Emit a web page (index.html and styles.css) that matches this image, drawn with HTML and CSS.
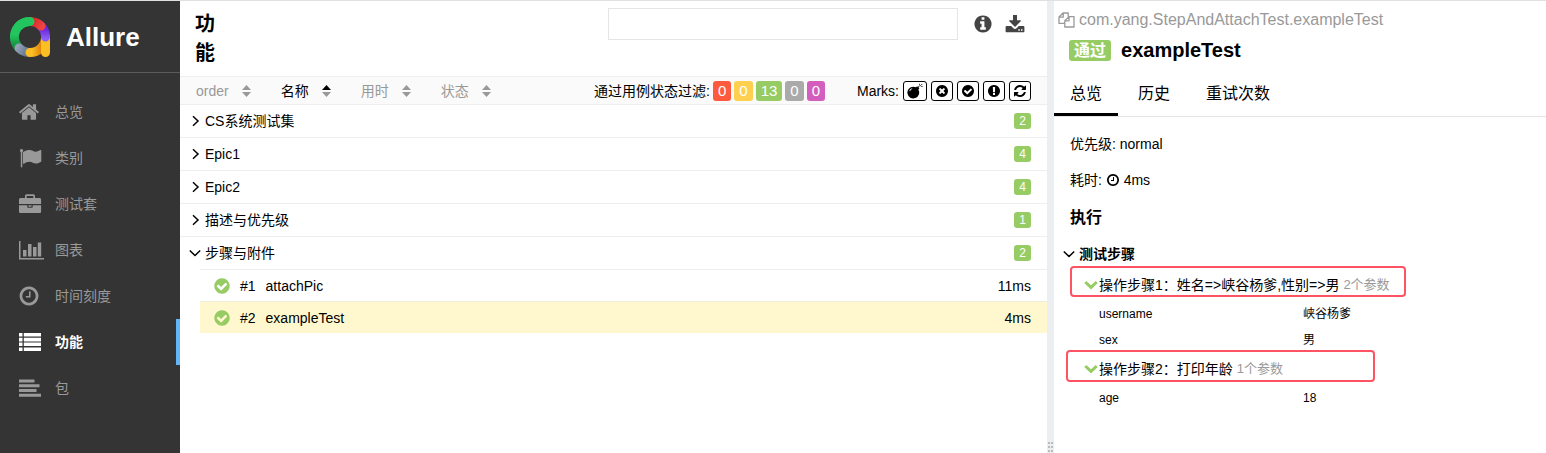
FILE: index.html
```html
<!DOCTYPE html>
<html lang="zh-CN">
<head>
<meta charset="utf-8">
<title>Allure</title>
<link rel="stylesheet" href="styles.css">
</head>
<body>
<svg class="sprite" aria-hidden="true">
  <symbol id="i-home" viewBox="0 0 1792 1792"><path d="M1472 992v480q0 26-19 45t-45 19h-384v-384h-256v384h-384q-26 0-45-19t-19-45v-480q0-1 .5-3t.5-3l575-474 575 474q1 2 1 6zm223-69l-62 74q-8 9-21 11h-3q-13 0-21-7l-692-577-692 577q-12 8-24 7-13-2-21-11l-62-74q-8-10-7-23.5t11-21.5l719-599q32-26 76-26t76 26l244 204v-195q0-14 9-23t23-9h192q14 0 23 9t9 23v408l219 182q10 8 11 21.5t-7 23.5z"/></symbol>
  <symbol id="i-flag" viewBox="0 0 26 22"><path d="M3.500 2a1.700 1.700 0 0 1 .8 3.200V20.200H2.800V5.200A1.700 1.700 0 0 1 3.500 2zM5.300 5C7.500 3.600 9.500 3 11.500 3c2.600 0 4 1.700 6.300 1.700 1.700 0 3.200-.8 4.600-1.600.5-.2.9 0 .9.500v10.600c0 .4-.3.700-.6.900-1.400.8-3 1.500-4.600 1.500-2.800 0-4-1.800-6.800-1.800-2 0-3.700.9-5.400 1.900-.4.200-.9 0-.9-.5V5.600c0-.2.100-.4.300-.6z"/></symbol>
  <symbol id="i-case" viewBox="0 0 26 22"><path fill-rule="evenodd" d="M7 5V3.200C7 2 7.700 1.300 8.800 1.300h6.400c1.100 0 1.800.7 1.800 1.900V5h4.500c.9 0 1.600.7 1.600 1.600V11H1V6.600C1 5.700 1.700 5 2.600 5zM8.700 5h6.600V3H8.700zM1 12.200h8.300v1.600c0 .6.4 1 1 1h3.400c.6 0 1-.4 1-1v-1.600h8.400v6.200c0 .9-.7 1.600-1.600 1.600h-19C1.700 20 1 19.300 1 18.400zM10.500 12.200h3v1.500h-3z"/></symbol>
  <symbol id="i-chart" viewBox="0 0 26 22"><path d="M1 2h1.500v17H26v1.600H1zM5 11h3.500v6.500H5zM10 5h3.500v12.500H10zM15 8h3.500v9.500H15zM19.800 3.500h3.400v14h-3.400z"/></symbol>
  <symbol id="i-clock" viewBox="0 0 1792 1792"><path d="M1024 544v448q0 14-9 23t-23 9h-320q-14 0-23-9t-9-23v-64q0-14 9-23t23-9h224v-352q0-14 9-23t23-9h64q14 0 23 9t9 23zm416 352q0-148-73-273t-198-198-273-73-273 73-198 198-73 273 73 273 198 198 273 73 273-73 198-198 73-273zm224 0q0 209-103 385.5t-279.5 279.5-385.5 103-385.5-103-279.5-279.5-103-385.5 103-385.5 279.5-279.5 385.5-103 385.5 103 279.5 279.5 103 385.5z"/></symbol>
  <symbol id="i-list" viewBox="0 0 26 22"><path d="M1 2h3.500v3.600H1zM5.800 2H23v3.600H5.800zM1 6.800h3.500v3.600H1zM5.800 6.800H23v3.600H5.800zM1 11.600h3.500v3.400H1zM5.800 11.600H23v3.400H5.800zM1 16.400h3.500V20H1zM5.800 16.400H23V20H5.800z"/></symbol>
  <symbol id="i-align" viewBox="0 0 26 22"><path d="M1 2.500h15.500v3H1zM1 7.200h20.500v3H1zM1 12h17.500v3H1zM1 16.700h22v3H1z"/></symbol>
  <symbol id="i-info" viewBox="0 0 1792 1792"><path d="M1152 1376v-160q0-14-9-23t-23-9h-96v-512q0-14-9-23t-23-9h-320q-14 0-23 9t-9 23v160q0 14 9 23t23 9h96v320h-96q-14 0-23 9t-9 23v160q0 14 9 23t23 9h448q14 0 23-9t9-23zm-128-896v-160q0-14-9-23t-23-9h-192q-14 0-23 9t-9 23v160q0 14 9 23t23 9h192q14 0 23-9t9-23zm640 416q0 209-103 385.5t-279.5 279.5-385.500 103-385.5-103-279.5-279.5-103-385.5 103-385.5 279.5-279.5 385.5-103 385.5 103 279.5 279.5 103 385.5z"/></symbol>
  <symbol id="i-download" viewBox="0 0 20 20"><path fill-rule="evenodd" d="M8 1h4v5.300h3.300c.6 0 .8.500.4.900l-5.200 5.200c-.3.300-.7.300-1 0L4.300 7.200c-.4-.4-.2-.9.400-.9H8zM1.500 12h4.700l2.200 2.200c.9.900 2.300.9 3.200 0l2.200-2.200h4.700c.5 0 .9.400.9.900v4.500c0 .5-.4.900-.9.900h-17c-.5 0-.9-.4-.9-.9v-4.500c0-.5.400-.9.900-.9zM13.300 15.300v1.500h1.500v-1.500zM16 15.300v1.500h1.500v-1.500z"/></symbol>
  <symbol id="i-bomb" viewBox="0 0 16 16"><path fill-rule="evenodd" d="M6.400 3.700c1 0 1.900.2 2.700.6l1-1 .8.700.9-.9.600.6-.9.900.8.900-1 1A5.900 5.900 0 1 1 6.400 3.700zM3 8.300c.4-1.100 1.200-1.900 2.300-2.300L5 5.300C3.700 5.800 2.800 6.700 2.300 8zM12.400 3.100l.9-1 .6.500-.9 1zM12.200.8h.7v1.500h-.7zM14 1.800l1-1 .5.500-1 1zM14.200 3h1.500v.7h-1.500z"/></symbol>
  <symbol id="i-times" viewBox="0 0 1792 1792"><path d="M1277 1122q0-26-19-45l-181-181 181-181q19-19 19-45 0-27-19-46l-90-90q-19-19-46-19-26 0-45 19l-181 181-181-181q-19-19-45-19-27 0-46 19l-90 90q-19 19-19 46 0 26 19 45l181 181-181 181q-19 19-19 45 0 27 19 46l90 90q19 19 46 19 26 0 45-19l181-181 181 181q19 19 45 19 27 0 46-19l90-90q19-19 19-46zm387-226q0 209-103 385.5t-279.5 279.5-385.5 103-385.5-103-279.5-279.5-103-385.5 103-385.5 279.5-279.5 385.5-103 385.5 103 279.5 279.5 103 385.5z"/></symbol>
  <symbol id="i-check" viewBox="0 0 1792 1792"><path d="M1412 734q0-28-18-46l-91-90q-19-19-45-19t-45 19l-408 407-226-226q-19-19-45-19t-45 19l-91 90q-18 18-18 46 0 27 18 45l362 362q19 19 45 19 27 0 46-19l543-543q18-18 18-45zm252 162q0 209-103 385.5t-279.5 279.5-385.5 103-385.5-103-279.5-279.5-103-385.5 103-385.5 279.5-279.5 385.5-103 385.5 103 279.5 279.5 103 385.5z"/></symbol>
  <symbol id="i-excl" viewBox="0 0 1792 1792"><path d="M896 128q209 0 385.5 103t279.5 279.5 103 385.5-103 385.5-279.5 279.5-385.5 103-385.5-103-279.5-279.5-103-385.5 103-385.5 279.5-279.5 385.5-103zm128 1247v-190q0-14-9-23.500t-22-9.500h-192q-13 0-23 10t-10 23v190q0 13 10 23t23 10h192q13 0 22-9.500t9-23.500zm-2-344l18-621q0-12-10-18-10-8-24-8h-220q-14 0-24 8-10 6-10 18l17 621q0 10 10 17.500t24 7.500h185q14 0 23.500-7.500t10.500-17.500z"/></symbol>
  <symbol id="i-refresh" viewBox="0 0 1792 1792"><path d="M1639 1056q0 5-1 7-64 268-268 434.500t-478 166.500q-146 0-282.500-55t-243.500-157l-129 129q-19 19-45 19t-45-19-19-45v-448q0-26 19-45t45-19h448q26 0 45 19t19 45-19 45l-137 137q71 66 161 102t187 36q134 0 250-65t186-179q11-17 53-117 8-23 30-23h192q13 0 22.500 9.500t9.500 22.500zm25-800v448q0 26-19 45t-45 19h-448q-26 0-45-19t-19-45 19-45l138-138q-148-137-349-137-134 0-250 65t-186 179q-11 17-53 117-8 23-30 23h-199q-13 0-22.500-9.500t-9.500-22.500v-7q65-268 270-434.500t480-166.500q146 0 284 55.500t245 156.500l130-129q19-19 45-19t45 19 19 45z"/></symbol>
  <symbol id="i-copy" viewBox="0 0 17 16"><path fill="none" stroke="currentColor" stroke-width="1.300" stroke-linejoin="round" d="M6.800 11.400H1V5L5 1h5.200v3.600M5.200 1v4.200H1M11 4.600h5V15H6.800V8.700zM11 4.600v4.200H6.800"/></symbol>
  <symbol id="i-right" viewBox="0 0 12 12"><path fill="none" stroke="currentColor" stroke-width="1.500" d="M4 1.300 9 6l-5 4.700"/></symbol>
  <symbol id="i-down" viewBox="0 0 12 12"><path fill="none" stroke="currentColor" stroke-width="1.500" d="M.8 3.500 6 8.500l5.200-5"/></symbol>
  <symbol id="i-fat" viewBox="0 0 14 12"><path fill="none" stroke="currentColor" stroke-width="3" d="M1.300 3 7 8.400 12.700 3"/></symbol>
  <symbol id="i-sort" viewBox="0 0 9 12"><path d="M0 5 4.500 0 9 5z"/><path d="M0 7h9l-4.500 5z"/></symbol>
</svg>

<div class="app">
  <aside class="side">
    <a class="brand" href="#">
      <svg class="logo" viewBox="0 0 40 40" aria-hidden="true">
        <defs>
          <linearGradient id="gg" gradientUnits="userSpaceOnUse" x1="0" y1="18" x2="0" y2="32"><stop offset="0" stop-color="#22c55e"/><stop offset="1" stop-color="#15803d"/></linearGradient>
          <linearGradient id="gr" gradientUnits="userSpaceOnUse" x1="22" y1="5" x2="32" y2="10"><stop offset="0" stop-color="#dc2626"/><stop offset="1" stop-color="#ef4444"/></linearGradient>
          <linearGradient id="gp" gradientUnits="userSpaceOnUse" x1="0" y1="12" x2="0" y2="21"><stop offset="0" stop-color="#6d28d9"/><stop offset="1" stop-color="#8b5cf6"/></linearGradient>
          <linearGradient id="gy" gradientUnits="userSpaceOnUse" x1="22" y1="0" x2="33" y2="0"><stop offset="0" stop-color="#fbbf24"/><stop offset="1" stop-color="#d97706"/></linearGradient>
          <linearGradient id="gs" gradientUnits="userSpaceOnUse" x1="7" y1="30" x2="18" y2="36"><stop offset="0" stop-color="#94a3b8"/><stop offset="1" stop-color="#64748b"/></linearGradient>
        </defs>
        <g fill="none" stroke-width="9" stroke-linecap="round">
          <path stroke="url(#gg)" stroke-linecap="butt" d="M20 4.500A15.500 15.500 0 0 0 9 31"/>
          <path stroke="url(#gs)" d="M9 31A15.500 15.500 0 0 0 19 35.500"/>
          <path stroke="url(#gy)" d="M35.500 20A15.500 15.500 0 0 1 20 35.500"/>
          <path stroke="#fbbf24" d="M35.500 22v13.500"/>
          <path stroke="url(#gp)" d="M31 9A15.500 15.500 0 0 1 35.500 20"/>
          <path stroke="url(#gr)" d="M20 4.500A15.500 15.500 0 0 1 31 9"/>
          <path stroke="#22c55e" d="M20 4.500A15.500 15.500 0 0 0 9 9"/>
        </g>
      </svg>
      <span>Allure</span>
    </a>
    <nav class="nav">
      <a href="#"><svg class="nav-sq"><use href="#i-home"/></svg>总览</a>
      <a href="#"><svg><use href="#i-flag"/></svg>类别</a>
      <a href="#"><svg><use href="#i-case"/></svg>测试套</a>
      <a href="#"><svg><use href="#i-chart"/></svg>图表</a>
      <a href="#"><svg class="nav-sq"><use href="#i-clock"/></svg>时间刻度</a>
      <a href="#" class="on" aria-current="page"><svg><use href="#i-list"/></svg>功能</a>
      <a href="#"><svg><use href="#i-align"/></svg>包</a>
    </nav>
  </aside>

  <main class="tree">
    <header class="head">
      <h1>功能</h1>
      <div class="tools">
        <input class="search" type="search" aria-label="搜索">
        <button aria-label="信息"><svg><use href="#i-info"/></svg></button>
        <button aria-label="下载"><svg><use href="#i-download"/></svg></button>
      </div>
    </header>
    <div class="bar">
      <div class="sorts">
        <button>order<svg><use href="#i-sort"/></svg></button>
        <button class="on">名称<svg viewBox="0 0 9 12"><path d="M0 5 4.500 0 9 5z"/><path fill="#999" d="M0 7h9l-4.500 5z"/></svg></button>
        <button>用时<svg><use href="#i-sort"/></svg></button>
        <button>状态<svg><use href="#i-sort"/></svg></button>
      </div>
      <div class="filters">
        <span>通过用例状态过滤:</span>
        <button class="failed">0</button>
        <button class="broken">0</button>
        <button class="passed">13</button>
        <button class="skipped">0</button>
        <button class="unknown">0</button>
      </div>
      <div class="marks">
        <span>Marks:</span>
        <button class="wide" aria-label="bomb"><svg><use href="#i-bomb"/></svg></button>
        <button aria-label="failed"><svg><use href="#i-times"/></svg></button>
        <button aria-label="passed"><svg><use href="#i-check"/></svg></button>
        <button aria-label="new"><svg><use href="#i-excl"/></svg></button>
        <button aria-label="retries"><svg><use href="#i-refresh"/></svg></button>
      </div>
    </div>
    <ul class="list">
      <li class="group"><svg><use href="#i-right"/></svg><span class="name">CS系统测试集</span><span class="count">2</span></li>
      <li class="group"><svg><use href="#i-right"/></svg><span class="name">Epic1</span><span class="count">4</span></li>
      <li class="group"><svg><use href="#i-right"/></svg><span class="name">Epic2</span><span class="count">4</span></li>
      <li class="group"><svg><use href="#i-right"/></svg><span class="name">描述与优先级</span><span class="count">1</span></li>
      <li class="group open"><svg><use href="#i-down"/></svg><span class="name">步骤与附件</span><span class="count">2</span></li>
    </ul>
    <ul class="leaves">
      <li><a href="#"><svg><use href="#i-check"/></svg><span class="no">#1</span><span class="name">attachPic</span><span>11ms</span></a></li>
      <li class="on"><a href="#"><svg><use href="#i-check"/></svg><span class="no">#2</span><span class="name">exampleTest</span><span>4ms</span></a></li>
    </ul>
  </main>

  <div class="gutter" role="separator"><svg viewBox="0 0 5 11" aria-hidden="true"><path d="M0 0h2v2H0zM3 0h2v2H3zM0 4h2v2H0zM3 4h2v2H3zM0 8h2v2H0zM3 8h2v2H3z"/></svg></div>

  <section class="detail">
    <div class="path"><svg><use href="#i-copy"/></svg>com.yang.StepAndAttachTest.exampleTest</div>
    <h2><span class="badge">通过</span>exampleTest</h2>
    <nav class="tabs"><a href="#" class="on">总览</a><a href="#">历史</a><a href="#">重试次数</a></nav>
    <div class="body">
      <p>优先级: normal</p>
      <p>耗时: <svg><use href="#i-clock"/></svg> 4ms</p>
      <h3>执行</h3>
      <h4><svg><use href="#i-down"/></svg>测试步骤</h4>
      <div class="step">
        <div class="step-head"><svg><use href="#i-fat"/></svg>操作步骤1：姓名=&gt;峡谷杨爹,性别=&gt;男<small>2个参数</small><i class="outline outline-a"></i></div>
        <table><tr><th scope="row">username</th><td>峡谷杨爹</td></tr><tr><th scope="row">sex</th><td>男</td></tr></table>
      </div>
      <div class="step">
        <div class="step-head"><svg><use href="#i-fat"/></svg>操作步骤2：打印年龄<small>1个参数</small><i class="outline outline-b"></i></div>
        <table><tr><th scope="row">age</th><td>18</td></tr></table>
      </div>
    </div>
  </section>
</div>
</body>
</html>
```
FILE: styles.css
```css
* { box-sizing: border-box; }
body { margin: 0; font: 14px/20px "Liberation Sans", "Noto Sans CJK SC", sans-serif; color: #000; background: #fff; }
h1, h2, h3, h4, p, ul { margin: 0; padding: 0; }
ul { list-style: none; }
a { color: inherit; text-decoration: none; }
button { border: 0; padding: 0; background: none; font: inherit; color: inherit; cursor: pointer; }
svg { fill: currentColor; flex: none; }
.sprite { position: absolute; width: 0; height: 0; }

.app { display: flex; min-height: 100vh; border-top: 1px solid #e0e0e0; }

.side { width: 180px; flex: none; background: #343434; color: #999; }
.brand { display: flex; align-items: center; gap: 16px; height: 72px; padding-left: 10px; border-bottom: 1px solid #5b5b5b; color: #fff; font-size: 26px; font-weight: bold; line-height: 32px; }
.logo { width: 40px; height: 40px; }
.nav { padding-top: 16px; }
.nav a { display: flex; align-items: center; gap: 11px; height: 46px; padding-left: 18px; border-right: 4px solid transparent; }
.nav svg { width: 26px; height: 22px; }
.nav .nav-sq { width: 22px; margin-right: 4px; }
.nav .on { color: #fff; font-weight: bold; border-color: #64b5f6; }

.tree { flex: 1; min-width: 0; }
.head { display: flex; justify-content: space-between; align-items: flex-start; padding: 7px 22px 8px 15px; }
.head h1 { width: 20px; padding-top: 2px; font-size: 20px; line-height: 29px; }
.tools { display: flex; align-items: center; gap: 12px; color: #444; }
.search { width: 350px; height: 32px; margin-right: 3px; border: 1px solid #e5e5e5; background: #fff; font: inherit; padding: 0 8px; }
.tools svg { display: block; width: 20px; height: 20px; }

.bar { display: flex; align-items: center; height: 29px; padding: 0 16px; border: solid #eceff1; border-width: 1px 0; background: #fafafa; }
.sorts { display: flex; gap: 30px; flex: 1; color: #999; }
.sorts button { display: flex; align-items: center; gap: 13px; }
.sorts svg { width: 9px; height: 12px; }
.sorts .on { color: #000; }
.filters { display: flex; align-items: center; gap: 3px; margin-right: 32px; }
.marks { display: flex; align-items: center; gap: 4px; }
.filters button { padding: 0 5px; border-radius: 3px; color: #fff; font-size: 15px; }
.failed { background: #fd5a3e; }
.broken { background: #ffd050; }
.passed { background: #97cc64; }
.skipped { background: #aaa; }
.unknown { background: #d35ebe; }
.marks button { display: flex; align-items: center; justify-content: center; width: 22px; height: 20px; border: 1px solid #000; border-radius: 3px; background: #fff; }
.marks .wide { width: 24px; }
.marks svg { width: 14px; height: 14px; }
.marks .wide svg { width: 16px; height: 16px; }

.group { display: flex; align-items: center; height: 33px; padding: 0 16px 0 9px; border-bottom: 1px solid #eceff1; }
.group svg { width: 12px; height: 12px; margin-right: 4px; }
.name { flex: 1; }
.count { padding: 0 5px; border-radius: 3px; background: #97cc64; color: #fff; font-size: 12px; line-height: 16px; }
.open { border-bottom: 0; height: 32px; }
.leaves { padding-left: 20px; }
.leaves li { border-top: 1px solid #eceff1; }
.leaves .on { background: #fff8ce; border-color: #eeeedd; }
.leaves a { display: flex; align-items: center; height: 31px; padding: 0 16px 0 13px; }
.leaves svg { width: 18px; height: 18px; color: #97cc64; }
.no { margin: 0 10px 0 9px; }

.gutter { display: flex; align-items: flex-end; justify-content: center; width: 7px; flex: none; background: #eceff1; }
.gutter svg { width: 5px; height: 11px; color: #bbb; }

.detail { width: 492px; flex: none; }
.path { display: flex; align-items: center; gap: 4px; padding: 9px 4px 0; color: #999; font-size: 16px; }
.path svg { width: 17px; height: 16px; }
.detail h2 { display: flex; align-items: center; gap: 10px; padding: 8px 15px 0; font-size: 20px; line-height: 24px; }
.badge { padding: 0 5px; border-radius: 3px; background: #97cc64; color: #fff; font-size: 16px; line-height: 21px; }
.tabs { display: flex; gap: 4px; margin-top: 9px; border-bottom: 1px solid #e5e5e5; font-size: 16px; }
.tabs a { padding: 13px 16px 9px; border-bottom: 3px solid transparent; }
.tabs .on { border-color: #000; }
.body { padding: 17px 16px; }
.body p { margin-bottom: 16px; }
.body p svg { width: 14px; height: 14px; vertical-align: -2px; }
.body h3 { margin-bottom: 14px; font-size: 16px; line-height: 24px; }
.body h4 { display: flex; align-items: center; gap: 4px; margin: 0 0 5px -7px; font-size: 14px; }
.body h4 svg { width: 12px; height: 12px; }
.step { padding-left: 14px; }
.step-head { display: flex; align-items: center; gap: 1px; height: 32px; position: relative; }
.step-head svg { width: 14px; height: 12px; color: #97cc64; }
.step small { margin-left: 3px; font-size: 13px; color: #999; }
.outline { position: absolute; border: 2px solid #ff5364; border-radius: 4px; }
.outline-a { left: -14px; top: -3px; width: 336px; height: 31px; }
.outline-b { left: -18px; top: -3px; width: 309px; height: 32px; }
.step table { width: 100%; padding-left: 15px; border-spacing: 0; table-layout: fixed; font-size: 12px; }
.step th, .step td { height: 26px; padding: 0; text-align: left; font-weight: normal; }
.step th { width: 204px; }
```
